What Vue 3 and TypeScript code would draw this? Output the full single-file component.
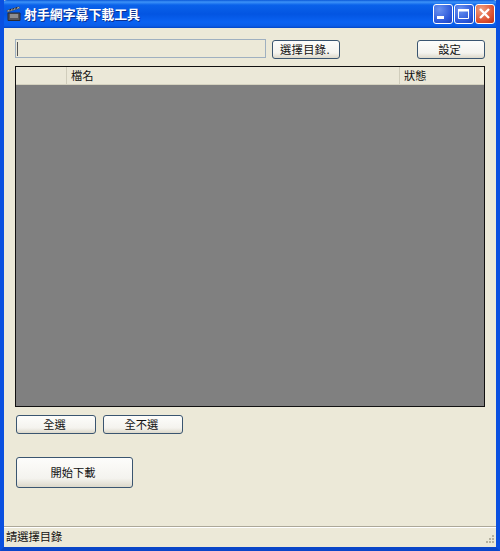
<script setup lang="ts">
const title = '射手網字幕下載工具'
</script>

<template>
  <div class="window">
    <header class="titlebar">
      <svg class="app-icon" width="16" height="16" viewBox="0 0 16 16">
        <path d="M2 7h12v7.5H2z" fill="#55555c" stroke="#2a2a30" stroke-width="1" />
        <path d="M1.5 6 13.5 2.2 13 .8 1 4.6z" fill="#f2f2f2" stroke="#444" stroke-width=".7" />
        <path d="M3.5 4.5 5 3.2M6.5 3.6 8 2.4M9.5 2.7 11 1.6" stroke="#222" stroke-width="1.2" />
        <path d="M4 9h8M4 11h8" stroke="#c4c4c4" stroke-width="1" />
      </svg>
      <span class="title">{{ title }}</span>
      <div class="controls">
        <span class="ctl blue">
          <svg width="20" height="20" viewBox="0 0 20 20"><rect x="4" y="12" width="7" height="3" fill="#fff" /></svg>
        </span>
        <span class="ctl blue">
          <svg width="20" height="20" viewBox="0 0 20 20"><path d="M4.5 5.5h10v9h-10z" fill="none" stroke="#fff" /><path d="M4 5h11v2.4H4z" fill="#fff" /></svg>
        </span>
        <span class="ctl red">
          <svg width="20" height="20" viewBox="0 0 20 20"><path d="m5 5 9 9M14 5l-9 9" stroke="#fff" stroke-width="2.4" /></svg>
        </span>
      </div>
    </header>

    <main class="body">
      <div class="toolbar">
        <div class="input"><span class="caret"></span></div>
        <button class="btn choose">選擇目錄.</button>
        <button class="btn settings">設定</button>
      </div>

      <section class="table">
        <div class="thead">
          <div class="th first"></div>
          <div class="th name">檔名</div>
          <div class="th status">狀態</div>
        </div>
        <div class="tbody"></div>
      </section>

      <div class="select-row">
        <button class="btn select">全選</button>
        <button class="btn select">全不選</button>
      </div>

      <button class="btn start">開始下載</button>
    </main>

    <footer class="statusbar">
      <span>請選擇目錄</span>
      <svg class="grip" width="12" height="12" viewBox="0 0 12 12">
        <g fill="#b5b2a0">
          <rect x="8" y="2" width="2" height="2" />
          <rect x="5" y="5" width="2" height="2" />
          <rect x="8" y="5" width="2" height="2" />
          <rect x="2" y="8" width="2" height="2" />
          <rect x="5" y="8" width="2" height="2" />
          <rect x="8" y="8" width="2" height="2" />
        </g>
      </svg>
    </footer>
  </div>
</template>

<style>
html, body { margin: 0; padding: 0; background: #0a52d8; }
</style>

<style scoped>
.window {
  width: 500px;
  height: 551px;
  box-sizing: border-box;
  display: flex;
  flex-direction: column;
  background: #ece9d8;
  border-left: 4px solid #0a50e0;
  border-right: 4px solid #0a50e0;
  border-bottom: 4px solid #0a46c8;
  font-family: "Noto Sans CJK TC", "Liberation Sans", sans-serif;
  font-size: 11.25px;
  color: #111;
  overflow: hidden;
}
.titlebar {
  height: 28px;
  margin: 0 -4px;
  flex: none;
  display: flex;
  align-items: center;
  padding: 0 5px 0 6px;
  border-radius: 7px 7px 0 0;
  background: linear-gradient(#0a58d8 0, #3d93f8 2px, #0a62ea 5px, #0355e2 14px, #0a62f2 22px, #0a5ce8 26px, #0346c4 28px);
}
.app-icon { flex: none; }
.title {
  margin-left: 2px;
  padding-bottom: 2px;
  color: #fff;
  font-weight: 700;
  font-size: 12.9px;
  text-shadow: 1px 1px 0 #0a2f90;
}
.controls { margin-left: auto; display: flex; gap: 1px; }
.ctl {
  width: 20px;
  height: 20px;
  box-sizing: border-box;
  border: 1px solid #fff;
  border-radius: 3px;
  display: flex;
  align-items: center;
  justify-content: center;
  overflow: hidden;
}
.ctl svg { flex: none; }
.ctl.blue { background: radial-gradient(circle at 30% 25%, #6a92f0, #2a56d8 70%, #1e40b8); }
.ctl.red { background: radial-gradient(circle at 30% 25%, #f0a080, #dc5030 65%, #b83018); }

.body {
  flex: 1;
  display: flex;
  flex-direction: column;
  padding: 11px 11px 0;
  min-height: 0;
}
.toolbar { display: flex; align-items: flex-start; height: 27px; flex: none; }
.input {
  width: 251px;
  height: 19px;
  box-sizing: border-box;
  border: 1px solid #9fb0c0;
  background: #ece9d8;
  display: flex;
  align-items: center;
  padding-left: 1px;
}
.caret { width: 1px; height: 14px; background: #555; }
.btn {
  box-sizing: border-box;
  padding: 0 3px 2px 0;
  border: 1px solid #3a5570;
  border-radius: 3px;
  background: linear-gradient(#fdfdfb, #f4f3ee 70%, #dcd8ca);
  font: inherit;
  color: #111;
  display: flex;
  align-items: center;
  justify-content: center;
}
.choose { width: 68px; height: 19px; margin: 1px 0 0 6px; padding-right: 2px; letter-spacing: .4px; }
.settings { width: 68px; height: 19px; margin: 1px 0 0 77px; }

.table {
  width: 470px;
  height: 341px;
  flex: none;
  box-sizing: border-box;
  border: 1px solid #111;
  display: flex;
  flex-direction: column;
}
.thead {
  height: 17px;
  flex: none;
  display: flex;
  align-items: center;
  background: #ebe8d8;
  border-bottom: 1px solid #d5d2c0;
}
.th { height: 100%; display: flex; align-items: center; box-sizing: border-box; padding-bottom: 2px; }
.first { width: 51px; border-right: 1px solid #d0cdbc; }
.name { width: 333px; padding-left: 4px; border-right: 1px solid #d0cdbc; }
.status { flex: 1; padding-left: 4px; }
.tbody { flex: 1; background: #808080; }

.select-row { display: flex; gap: 7px; margin: 8px 0 0 1px; flex: none; }
.select { width: 80px; height: 19px; padding-bottom: 1px; }
.start { width: 117px; height: 31px; margin: 23px 0 0 1px; flex: none; }

.statusbar {
  height: 21px;
  flex: none;
  box-sizing: border-box;
  display: flex;
  align-items: center;
  justify-content: space-between;
  padding: 0 0 2px 2px;
  border-top: 1px solid #aca899;
  box-shadow: inset 0 1px 0 #fff;
  background: #ece9d8;
}
.grip { align-self: flex-end; }
</style>
